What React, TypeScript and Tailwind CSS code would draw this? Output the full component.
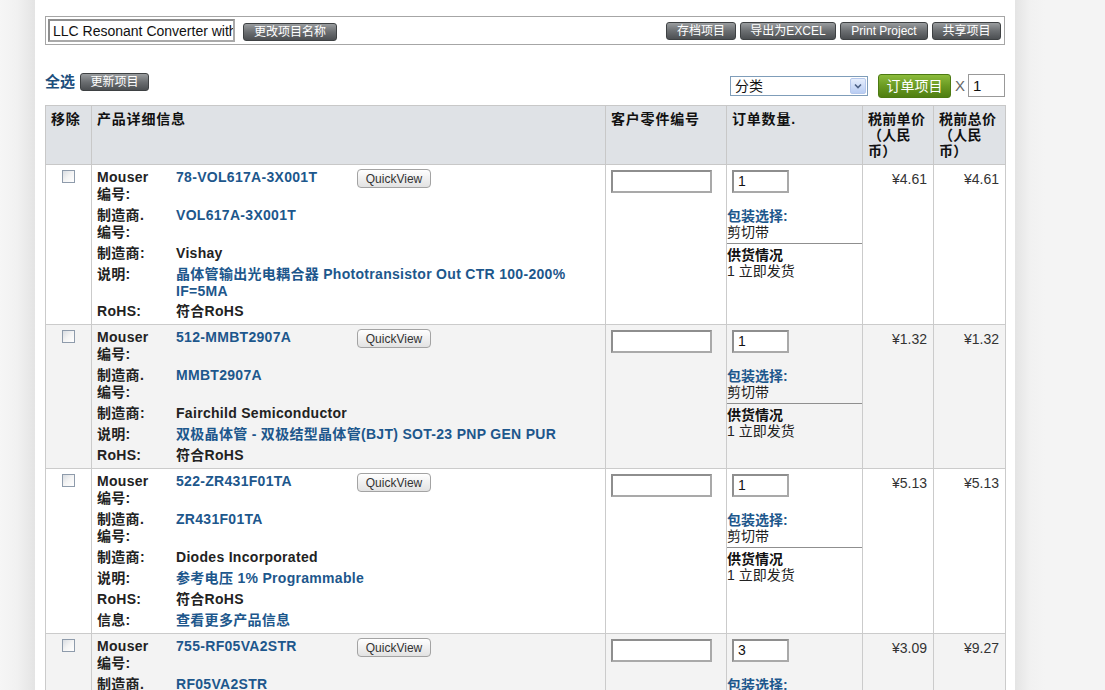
import React from "react";

type Row = {
  mouser: string;
  mfrNo: string;
  mfr: string;
  desc: string[];
  qty: string;
  unit: string;
  total: string;
  info?: boolean;
};

const ROWS: Row[] = [
  {
    mouser: "78-VOL617A-3X001T",
    mfrNo: "VOL617A-3X001T",
    mfr: "Vishay",
    desc: ["晶体管输出光电耦合器 Phototransistor Out CTR 100-200%", "IF=5MA"],
    qty: "1",
    unit: "¥4.61",
    total: "¥4.61",
  },
  {
    mouser: "512-MMBT2907A",
    mfrNo: "MMBT2907A",
    mfr: "Fairchild Semiconductor",
    desc: ["双极晶体管 - 双极结型晶体管(BJT) SOT-23 PNP GEN PUR"],
    qty: "1",
    unit: "¥1.32",
    total: "¥1.32",
  },
  {
    mouser: "522-ZR431F01TA",
    mfrNo: "ZR431F01TA",
    mfr: "Diodes Incorporated",
    desc: ["参考电压 1% Programmable"],
    qty: "1",
    unit: "¥5.13",
    total: "¥5.13",
    info: true,
  },
  {
    mouser: "755-RF05VA2STR",
    mfrNo: "RF05VA2STR",
    mfr: "ROHM Semiconductor",
    desc: ["整流器 Fast Recovery Diode"],
    qty: "3",
    unit: "¥3.09",
    total: "¥9.27",
  },
];

function DarkButton({ children, className = "" }: { children: React.ReactNode; className?: string }) {
  return (
    <button
      className={`h-[18px] whitespace-nowrap rounded-[3px] border border-[#3e4143] bg-gradient-to-b from-[#9a9d9f] via-[#6b6e71] to-[#4c4f52] text-[12px] leading-[16px] text-white ${className}`}
    >
      {children}
    </button>
  );
}

function Label({ children }: { children: React.ReactNode }) {
  return <div className="font-bold text-[#222]">{children}</div>;
}

function Detail({ row }: { row: Row }) {
  const link = "font-bold text-[#1d578c]";
  return (
    <div className="grid grid-cols-[79px_1fr] text-[14px] leading-[17px] tracking-[0.3px]">
      <div className="pb-[4px]"><Label>Mouser<br />编号:</Label></div>
      <div className="flex items-start pb-[4px]">
        <span className={`w-[181px] ${link}`}>{row.mouser}</span>
        <button className="h-[19px] w-[74px] rounded-[4px] border border-[#a3a3a3] bg-gradient-to-b from-white to-[#e2e2e2] text-[12px] leading-[16px] tracking-normal text-[#333]">
          QuickView
        </button>
      </div>
      <div className="pb-[4px]"><Label>制造商.<br />编号:</Label></div>
      <div className={`pb-[4px] ${link}`}>{row.mfrNo}</div>
      <div className="pb-[4px]"><Label>制造商:</Label></div>
      <div className="pb-[4px] font-bold text-[#222]">{row.mfr}</div>
      <div className="pb-[4px]"><Label>说明:</Label></div>
      <div className={`pb-[4px] ${link} ${row.desc.length > 1 ? "leading-[16.5px]" : ""}`}>
        {row.desc.map((d, i) => (
          <div key={i}>{d}</div>
        ))}
      </div>
      <div className="pb-[4px]"><Label>RoHS:</Label></div>
      <div className="pb-[4px] font-bold text-[#222]">符合RoHS</div>
      {row.info && (
        <>
          <div className="pb-[4px]"><Label>信息:</Label></div>
          <div className={`pb-[4px] ${link}`}>查看更多产品信息</div>
        </>
      )}
    </div>
  );
}

function TextBox({ value = "", className = "" }: { value?: string; className?: string }) {
  return (
    <div
      className={`h-[23px] border-2 border-[#a9a9a9] border-t-[#8e8e8e] border-l-[#8e8e8e] bg-white pl-[4px] text-[14px] leading-[19px] text-[#111] ${className}`}
    >
      {value}
    </div>
  );
}

export default function App() {
  return (
    <div className="flex h-[690px] overflow-hidden bg-[#f4f4f4] font-['Liberation_Sans','Noto_Sans_CJK_SC',sans-serif] text-[#222]">
      <div className="w-[35px] shrink-0 bg-gradient-to-r from-[#f6f6f6] via-[#f1f1f1] to-[#e4e4e4]" />

      <div className="w-[980px] shrink-0 bg-white px-[10px] pt-[16px]">
        {/* 项目名称 */}
        <div className="flex h-[29px] items-center justify-between border border-[#a6a6a6] pl-[2px] pr-[3px]">
          <div className="flex items-center gap-[8px]">
            <input
              readOnly
              value="LLC Resonant Converter with Synchronous Rectification"
              className="h-[23px] w-[187px] border-2 border-[#a9a9a9] border-t-[#8e8e8e] border-l-[#8e8e8e] pl-[3px] text-[14px] leading-[19px] text-[#111] outline-none"
            />
            <DarkButton className="mt-[2px] w-[94px]">更改项目名称</DarkButton>
          </div>
          <div className="flex items-center gap-[4px]">
            <DarkButton className="w-[70px]">存档项目</DarkButton>
            <DarkButton className="w-[96px]">导出为EXCEL</DarkButton>
            <DarkButton className="w-[88px]">Print Project</DarkButton>
            <DarkButton className="w-[69px]">共享项目</DarkButton>
          </div>
        </div>

        {/* 操作栏 */}
        <div className="mt-[28px] flex h-[25px] justify-between">
          <div className="flex items-start gap-[5px]">
            <span className="text-[15px] font-bold leading-[17px] text-[#1d4f7d]">全选</span>
            <DarkButton className="w-[69px]">更新项目</DarkButton>
          </div>
          <div className="flex items-center">
            <div className="flex h-[20px] w-[138px] items-center justify-between border border-[#7f9db9] bg-white pl-[4px] pr-[1px] text-[14px] leading-[18px] text-[#111]">
              <span>分类</span>
              <span className="flex h-[16px] w-[16px] items-center justify-center rounded-[2px] border border-[#b6c8ec] bg-gradient-to-b from-[#e6eefc] to-[#b9cdf3]">
                <svg width="8" height="6" viewBox="0 0 8 6">
                  <path d="M1 1.5 L4 4.5 L7 1.5" fill="none" stroke="#4d6185" strokeWidth="1.6" />
                </svg>
              </span>
            </div>
            <button className="ml-[10px] h-[24px] w-[73px] rounded-[3px] border border-[#4c7a12] bg-gradient-to-b from-[#8cbc3c] via-[#6a9a22] to-[#4f7e12] text-[14px] leading-[20px] text-white">
              订单项目
            </button>
            <span className="ml-[4px] text-[15px] leading-[18px] text-[#666]">X</span>
            <div className="ml-[3px] h-[23px] w-[37px] border border-[#999] bg-white pl-[4px] text-[15px] leading-[21px] text-[#111]">
              1
            </div>
          </div>
        </div>

        {/* 项目表格 */}
        <table className="mt-[7px] w-[960px] table-fixed border-collapse text-[14px]">
          <colgroup>
            <col className="w-[46px]" />
            <col className="w-[514px]" />
            <col className="w-[121px]" />
            <col className="w-[136px]" />
            <col className="w-[71px]" />
            <col className="w-[72px]" />
          </colgroup>
          <thead>
            <tr className="h-[59px] bg-[#dfe2e6] text-left align-top font-bold leading-[16px] tracking-[0.8px] text-[#111]">
              <th className="border border-[#c8c8c8] pl-[5px] pt-[5px]">移除</th>
              <th className="border border-[#c8c8c8] pl-[5px] pt-[5px]">产品详细信息</th>
              <th className="border border-[#c8c8c8] pl-[5px] pt-[5px]">客户零件编号</th>
              <th className="border border-[#c8c8c8] pl-[5px] pt-[5px]">订单数量.</th>
              <th className="border border-[#c8c8c8] pl-[5px] pt-[5px] tracking-[0.3px]">
                税前单价<br />（人民<br />币）
              </th>
              <th className="border border-[#c8c8c8] pl-[5px] pt-[5px] tracking-[0.3px]">
                税前总价<br />（人民<br />币）
              </th>
            </tr>
          </thead>
          <tbody>
            {ROWS.map((row, i) => (
              <tr key={row.mouser} className={`align-top ${i % 2 ? "bg-[#f3f3f3]" : "bg-white"}`}>
                <td className="border border-[#cbcbcb] pt-[5px]">
                  <div className="mx-auto h-[13px] w-[13px] border border-[#8e9bab] bg-gradient-to-br from-[#d9dde2] via-[#f4f4f4] to-white" />
                </td>
                <td className="border border-[#cbcbcb] pl-[5px] pt-[4px]">
                  <Detail row={row} />
                </td>
                <td className="border border-[#cbcbcb] pl-[5px] pt-[5px]">
                  <TextBox className="w-[101px]" />
                </td>
                <td className="border border-[#cbcbcb] pt-[5px]">
                  <TextBox value={row.qty} className="ml-[5px] w-[57px]" />
                  <div className="mt-[15px] border-b border-[#8f8f8f] pb-[3px] leading-[16px]">
                    <div className="font-bold text-[#1d578c]">包装选择:</div>
                    <div>剪切带</div>
                  </div>
                  <div className="pt-[3px] leading-[16px]">
                    <div className="font-bold text-[#111]">供货情况</div>
                    <div>1 立即发货</div>
                  </div>
                </td>
                <td className="border border-[#cbcbcb] pr-[6px] pt-[6px] text-right text-[14px] leading-[16px] text-[#333]">
                  {row.unit}
                </td>
                <td className="border border-[#cbcbcb] pr-[6px] pt-[6px] text-right text-[14px] leading-[16px] text-[#333]">
                  {row.total}
                </td>
              </tr>
            ))}
          </tbody>
        </table>
      </div>

      <div className="w-[30px] shrink-0 bg-gradient-to-r from-[#e4e4e4] via-[#f1f1f1] to-[#f4f4f4]" />
    </div>
  );
}
